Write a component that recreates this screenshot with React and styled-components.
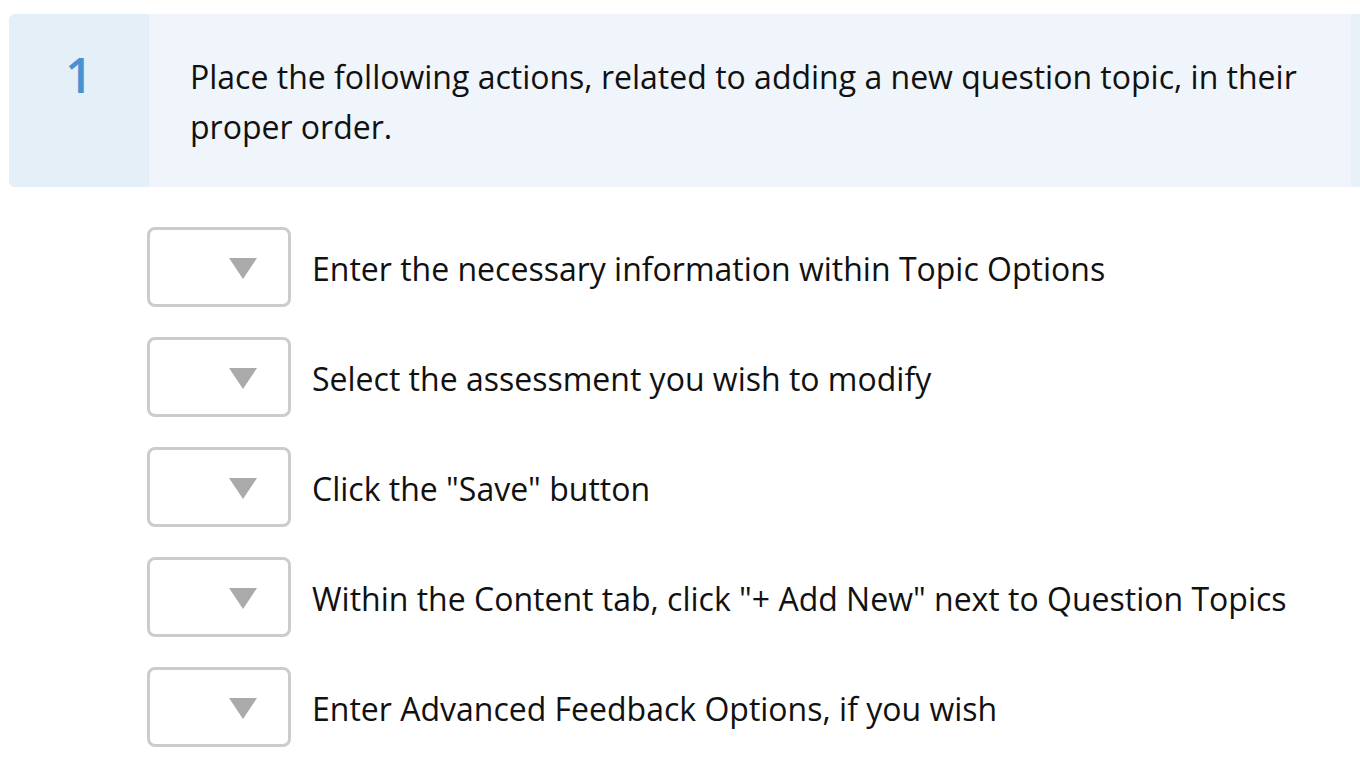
import React from 'react';
import styled, { createGlobalStyle } from 'styled-components';

const GlobalStyle = createGlobalStyle`
  html, body {
    margin: 0;
    padding: 0;
    background: #ffffff;
    font-family: "Open Sans", "Noto Sans", sans-serif;
    color: #111;
  }
`;

const Page = styled.div`
  width: 1360px;
  height: 780px;
  overflow: hidden;
  padding: 14px 0 0 9px;
  box-sizing: border-box;
`;

const HeaderRow = styled.div`
  display: flex;
`;

const QuestionHeader = styled.div`
  display: flex;
  width: 1342px;
  height: 173px;
  border-radius: 6px 0 0 6px;
  background: #eff5fa;
  overflow: hidden;
`;

const NumberCell = styled.div`
  width: 140px;
  flex-shrink: 0;
  background: #e4eff7;
  display: flex;
  justify-content: center;
  padding-top: 27px;
  box-sizing: border-box;
  font-size: 48px;
  font-weight: 600;
  line-height: 1.4;
  color: #4892d2;
`;

const Prompt = styled.div`
  flex: 1;
  padding: 38px 40px 0 41px;
  font-size: 32px;
  line-height: 50px;
  color: #111;
`;

// a sliver of the next column that peeks in at the right edge
const SideStrip = styled.div`
  width: 9px;
  flex-shrink: 0;
  height: 173px;
  background: #e8f0f8;
`;

const Items = styled.div`
  display: flex;
  flex-direction: column;
  gap: 30px;
  margin: 40px 0 0 138px;
`;

const Row = styled.div`
  display: flex;
  align-items: center;
  gap: 21px;
`;

const Select = styled.div`
  width: 144px;
  height: 80px;
  box-sizing: border-box;
  border: 3px solid #cccccc;
  border-radius: 8px;
  background: #fff;
  display: flex;
  align-items: center;
  justify-content: flex-end;
  padding-right: 31px;
  flex-shrink: 0;
`;

const Caret = styled.div`
  width: 0;
  height: 0;
  border-left: 14px solid transparent;
  border-right: 14px solid transparent;
  border-top: 21px solid #aaaaaa;
  margin-top: 2px;
`;

const Label = styled.span`
  font-size: 32px;
  line-height: 40px;
  color: #111;
  margin-top: 4px;
`;

const steps = [
  'Enter the necessary information within Topic Options',
  'Select the assessment you wish to modify',
  'Click the "Save" button',
  'Within the Content tab, click "+ Add New" next to Question Topics',
  'Enter Advanced Feedback Options, if you wish',
];

export default function App() {
  return (
    <>
      <GlobalStyle />
      <Page>
        <HeaderRow>
          <QuestionHeader>
            <NumberCell>1</NumberCell>
            <Prompt>
              Place the following actions, related to adding a new question topic, in their proper order.
            </Prompt>
          </QuestionHeader>
          <SideStrip />
        </HeaderRow>
        <Items>
          {steps.map((s) => (
            <Row key={s}>
              <Select>
                <Caret />
              </Select>
              <Label>{s}</Label>
            </Row>
          ))}
        </Items>
      </Page>
    </>
  );
}
